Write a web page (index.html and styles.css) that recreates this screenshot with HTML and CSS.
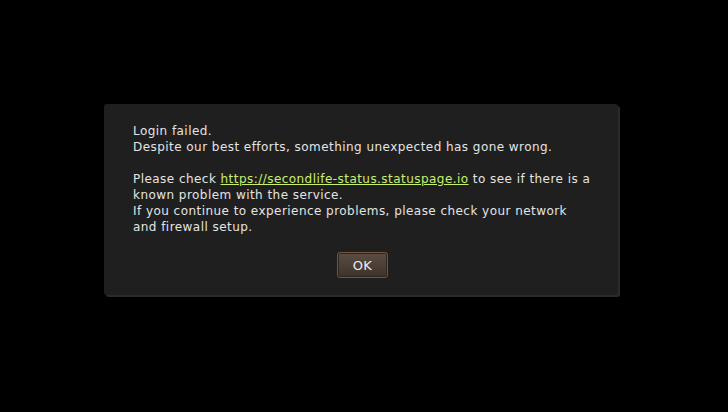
FILE: index.html
```html
<!DOCTYPE html>
<html lang="en">
<head>
  <meta charset="UTF-8">
  <title>Login failed</title>
  <link rel="stylesheet" href="styles.css">
</head>
<body>
  <div class="dialog">
    <div class="message">
      <p>Login failed.<br>Despite our best efforts, something unexpected has gone wrong.</p>
      <p>Please check <a href="#">https://secondlife-status.statuspage.io</a> to see if there is a known problem with the service.<br>If you continue to experience problems, please check your network and firewall setup.</p>
    </div>
    <div class="buttons">
      <button class="ok-button">OK</button>
    </div>
  </div>
</body>
</html>
```

FILE: styles.css
```css
html, body {
  margin: 0;
  height: 100%;
}

body {
  background: #000000;
  font-family: 'DejaVu Sans', sans-serif;
  font-size: 12px;
  letter-spacing: 0.45px;
  color: #e4e4e4;
  display: flex;
  flex-direction: column;
  align-items: flex-start;
  padding: 104px 0 0 104px;
  box-sizing: border-box;
}

.dialog {
  width: 514px;
  height: 191px;
  box-sizing: border-box;
  background: #1f1f1f;
  border-radius: 3px;
  box-shadow: 2px 2px 0 #2a2a2a;
  padding: 19px 26px 0 29px;
  display: flex;
  flex-direction: column;
}

.message p {
  margin: 0 0 16px 0;
  line-height: 16px;
}

.message a {
  color: #c9ef6e;
  text-decoration: underline;
}

.buttons {
  display: flex;
  justify-content: center;
  margin-top: 1px;
}

.ok-button {
  width: 51px;
  height: 26px;
  font-family: 'DejaVu Sans', sans-serif;
  font-size: 13px;
  letter-spacing: 0.3px;
  color: #eeeeee;
  background: linear-gradient(#5b4d43, #3d322b);
  border: 1px solid #70553f;
  border-radius: 3px;
  box-shadow: inset 0 0 0 1px #2f2520;
  padding: 0;
}
```
